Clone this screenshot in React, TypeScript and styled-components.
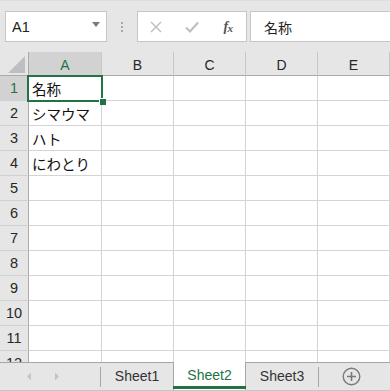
import React from "react";
import styled, { createGlobalStyle, css } from "styled-components";

const GlobalStyle = createGlobalStyle`
  body {
    margin: 0;
    background: #ffffff;
    font-family: "Liberation Sans", Arial, sans-serif;
  }
`;

const Window = styled.div`
  width: 390px;
  height: 391px;
  overflow: hidden;
  display: flex;
  flex-direction: column;
  background: #e6e6e6;
`;

const Toolbar = styled.div`
  height: 52px;
  flex: none;
  box-sizing: border-box;
  padding: 10px 0 0 5px;
  display: flex;
  align-items: flex-start;
  overflow: hidden;
  background: #e6e6e6;
  border-top: 1px solid #dedede;
`;

const NameBox = styled.div`
  width: 102px;
  height: 31px;
  box-sizing: border-box;
  border: 1px solid #c6c6c6;
  background: #fff;
  display: flex;
  align-items: center;
  justify-content: space-between;
  padding: 0 6px 0 6px;
  font-size: 14.5px;
  color: #222;
  flex: none;
`;

const DropArrow = styled.span`
  width: 0;
  height: 0;
  border-left: 4.5px solid transparent;
  border-right: 4.5px solid transparent;
  border-top: 5px solid #7a7a7a;
  margin-top: -4px;
`;

const Grip = styled.div`
  width: 30px;
  height: 31px;
  flex: none;
  display: flex;
  flex-direction: column;
  align-items: center;
  justify-content: center;
  gap: 2px;
  span {
    width: 2px;
    height: 2px;
    background: #a8a8a8;
  }
`;

const FxBox = styled.div`
  width: 110px;
  height: 31px;
  box-sizing: border-box;
  border: 1px solid #c6c6c6;
  background: #fff;
  display: flex;
  flex: none;
`;

const FxButton = styled.div`
  flex: 1;
  display: flex;
  align-items: center;
  justify-content: center;
`;

const FxLabel = styled.span`
  font-family: "Liberation Serif", "Times New Roman", serif;
  font-style: italic;
  font-weight: bold;
  font-size: 14px;
  color: #555;
  letter-spacing: -0.5px;
  sub {
    font-size: 11px;
    vertical-align: -1px;
  }
`;

const FormulaInput = styled.div`
  width: 160px;
  height: 31px;
  flex: none;
  margin-left: 3px;
  box-sizing: border-box;
  border: 1px solid #c6c6c6;
  background: #fff;
  display: flex;
  align-items: center;
  padding-left: 13px;
  font-family: "Noto Sans CJK JP", sans-serif;
  font-size: 14px;
  color: #222;
`;

const GridArea = styled.div`
  flex: 1;
  overflow: hidden;
  background: #fff;
`;

const Sheet = styled.div`
  display: grid;
  grid-template-columns: 29px 73px repeat(4, 72px);
  grid-template-rows: 24px;
  grid-auto-rows: 25px;
`;

const Corner = styled.div`
  background: #e6e6e6;
  border-right: 1px solid #ababab;
  border-bottom: 1px solid #ababab;
  box-sizing: border-box;
  display: flex;
  align-items: flex-end;
  justify-content: flex-end;
  padding: 0 3px 2px 0;
`;

const ColHead = styled.div<{ $selected?: boolean }>`
  box-sizing: border-box;
  background: ${(p) => (p.$selected ? "#d2d2d2" : "#e6e6e6")};
  color: ${(p) => (p.$selected ? "#217346" : "#262626")};
  border-right: 1px solid #c8c8c8;
  border-bottom: 1px solid #ababab;
  display: flex;
  align-items: center;
  justify-content: center;
  font-size: 14px;
  padding-top: 2px;
`;

const RowHead = styled.div<{ $selected?: boolean }>`
  box-sizing: border-box;
  background: ${(p) => (p.$selected ? "#d2d2d2" : "#e6e6e6")};
  color: ${(p) => (p.$selected ? "#217346" : "#262626")};
  border-right: 1px solid #ababab;
  border-bottom: 1px solid #d0d0d0;
  display: flex;
  align-items: center;
  justify-content: center;
  font-size: 14.5px;
`;

const Cell = styled.div<{ $active?: boolean }>`
  position: relative;
  box-sizing: border-box;
  border-right: 1px solid #d4d4d4;
  border-bottom: 1px solid #d4d4d4;
  display: flex;
  align-items: center;
  padding-left: 3px;
  font-family: "Noto Sans CJK JP", sans-serif;
  font-size: 14.5px;
  color: #111;
  white-space: nowrap;
  ${(p) =>
    p.$active &&
    css`
      z-index: 2;
      &::before {
        content: "";
        position: absolute;
        left: -2px;
        top: -1px;
        right: -2px;
        bottom: -2px;
        border: 2px solid #217346;
        pointer-events: none;
      }
      &::after {
        content: "";
        position: absolute;
        right: -5px;
        bottom: -5px;
        width: 6px;
        height: 6px;
        background: #217346;
        border: 1px solid #fff;
        border-width: 1px 0 0 1px;
      }
    `}
`;

const TabBar = styled.div`
  height: 29px;
  flex: none;
  box-sizing: border-box;
  background: #e6e6e6;
  border-top: 1px solid #a6a6a6;
  border-bottom: 1px solid #c6c6c6;
  display: flex;
  align-items: stretch;
`;

const TabNav = styled.div`
  width: 100px;
  flex: none;
  display: flex;
  align-items: center;
  padding-left: 26px;
  gap: 22px;
  box-sizing: border-box;
`;

const Divider = styled.div`
  width: 1px;
  height: 20px;
  align-self: center;
  background: #a6a6a6;
  flex: none;
`;

const Tab = styled.div<{ $active?: boolean }>`
  width: 72px;
  flex: none;
  display: flex;
  align-items: center;
  justify-content: center;
  font-size: 14px;
  color: #333;
  box-sizing: border-box;
  padding-bottom: 2px;
  position: relative;
  ${(p) =>
    p.$active &&
    css`
      width: 73px;
      margin-top: -1px;
      background: #fff;
      color: #217346;
      border-left: 1px solid #a6a6a6;
      border-right: 1px solid #a6a6a6;
      &::after {
        content: "";
        position: absolute;
        left: -1px;
        right: -1px;
        bottom: 1px;
        height: 3px;
        background: #217346;
      }
    `}
`;

const AddSheet = styled.div`
  flex: 1;
  display: flex;
  align-items: center;
  justify-content: center;
  padding-right: 6px;
`;

const columns = ["A", "B", "C", "D", "E"];
const values: Record<number, string> = {
  1: "名称",
  2: "シマウマ",
  3: "ハト",
  4: "にわとり",
};

const ArrowLeft = () => (
  <svg width="6" height="9" viewBox="0 0 6 9">
    <path d="M5 0.5 L1 4.5 L5 8.5 Z" fill="#c4c4c4" />
  </svg>
);

const ArrowRight = () => (
  <svg width="6" height="9" viewBox="0 0 6 9">
    <path d="M1 0.5 L5 4.5 L1 8.5 Z" fill="#c4c4c4" />
  </svg>
);

export default function App() {
  const rows = Array.from({ length: 12 }, (_, i) => i + 1);
  return (
    <>
      <GlobalStyle />
      <Window>
        <Toolbar>
          <NameBox>
            <span>A1</span>
            <DropArrow />
          </NameBox>
          <Grip>
            <span />
            <span />
            <span />
          </Grip>
          <FxBox>
            <FxButton>
              <svg width="12" height="12" viewBox="0 0 12 12">
                <path d="M1 1 L11 11 M11 1 L1 11" stroke="#bdbdbd" strokeWidth="1.4" />
              </svg>
            </FxButton>
            <FxButton>
              <svg width="14" height="12" viewBox="0 0 14 12">
                <path d="M1 6.5 L5 10.5 L13 1.5" stroke="#bdbdbd" strokeWidth="2" fill="none" />
              </svg>
            </FxButton>
            <FxButton>
              <FxLabel>
                f<sub>x</sub>
              </FxLabel>
            </FxButton>
          </FxBox>
          <FormulaInput>名称</FormulaInput>
        </Toolbar>
        <GridArea>
          <Sheet>
            <Corner>
              <svg width="17" height="17" viewBox="0 0 17 17">
                <path d="M17 0 L17 17 L0 17 Z" fill="#bfbfbf" />
              </svg>
            </Corner>
            {columns.map((c) => (
              <ColHead key={c} $selected={c === "A"}>
                {c}
              </ColHead>
            ))}
            {rows.map((r) => (
              <React.Fragment key={r}>
                <RowHead $selected={r === 1}>{r}</RowHead>
                {columns.map((c) => (
                  <Cell key={c} $active={r === 1 && c === "A"}>
                    {c === "A" ? values[r] : null}
                  </Cell>
                ))}
              </React.Fragment>
            ))}
          </Sheet>
        </GridArea>
        <TabBar>
          <TabNav>
            <ArrowLeft />
            <ArrowRight />
          </TabNav>
          <Divider />
          <Tab>Sheet1</Tab>
          <Tab $active>Sheet2</Tab>
          <Tab>Sheet3</Tab>
          <Divider />
          <AddSheet>
            <svg width="19" height="19" viewBox="0 0 19 19">
              <circle cx="9.5" cy="9.5" r="8.3" stroke="#7a7a7a" strokeWidth="1.4" fill="none" />
              <path d="M9.5 5 V14 M5 9.5 H14" stroke="#7a7a7a" strokeWidth="1.6" />
            </svg>
          </AddSheet>
        </TabBar>
      </Window>
    </>
  );
}
